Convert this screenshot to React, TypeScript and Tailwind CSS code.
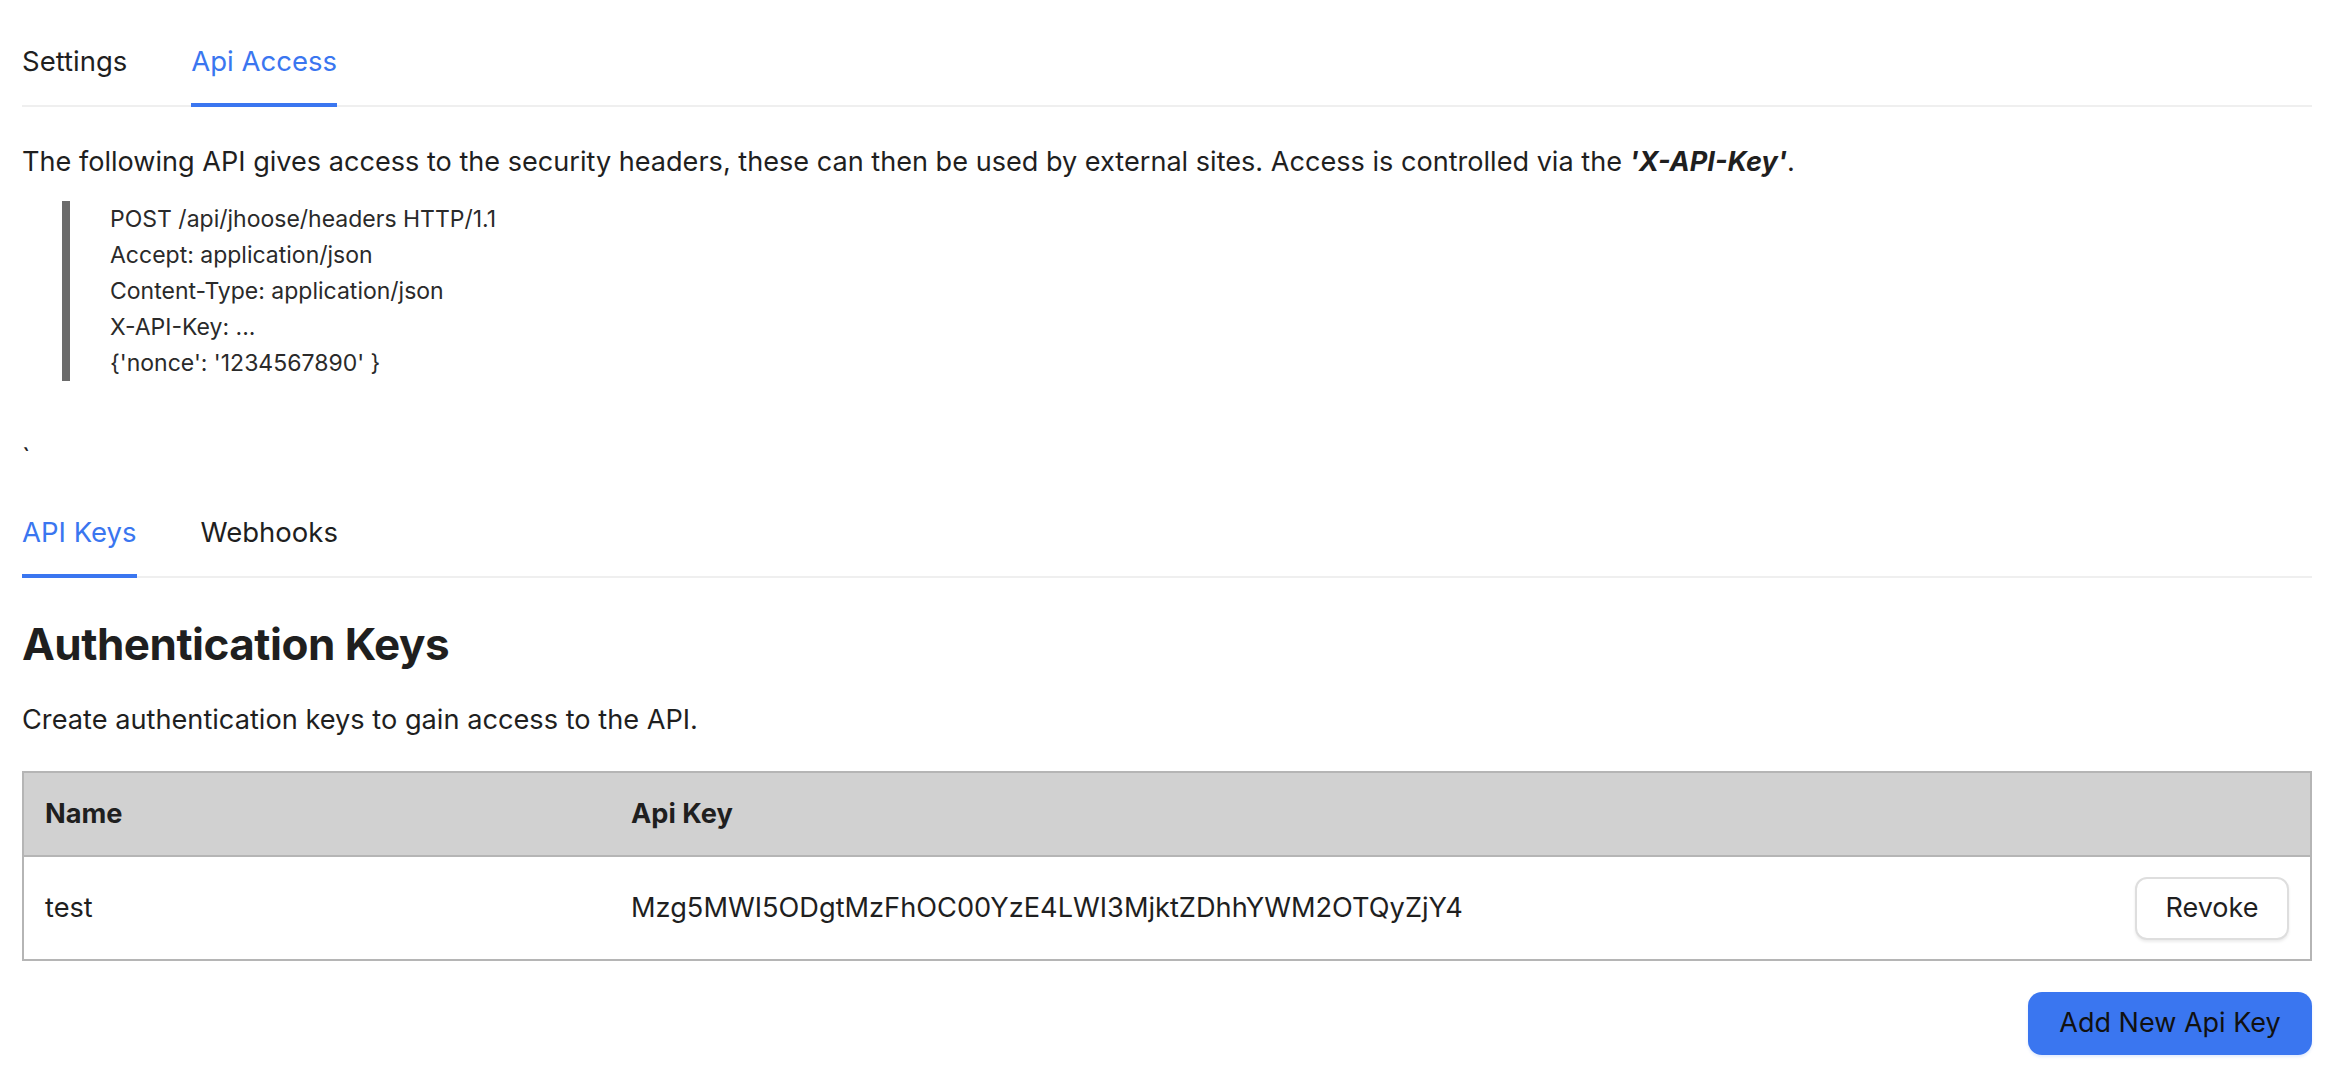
import React from "react";

const font = "font-['Inter','Noto_Sans',sans-serif]";

function Tabs({ items, active }: { items: string[]; active: number }) {
  return (
    <div className="flex gap-[64px] border-b-2 border-[#efefef]">
      {items.map((t, i) => (
        <div
          key={t}
          className={
            i === active
              ? "-mb-[2px] border-b-4 border-[#3a76f0] pb-[26px] text-[27.5px] leading-[32px] text-[#3a76f0]"
              : "-mb-[2px] border-b-4 border-transparent pb-[26px] text-[27.5px] leading-[32px] text-[#1f1f1f]"
          }
        >
          {t}
        </div>
      ))}
    </div>
  );
}

const request = [
  "POST /api/jhoose/headers HTTP/1.1",
  "Accept: application/json",
  "Content-Type: application/json",
  "X-API-Key: ...",
  "{'nonce': '1234567890' }",
];

export default function App() {
  return (
    <div className={`min-h-screen bg-white px-[22px] pt-[45px] text-[#1f1f1f] ${font}`}>
      <Tabs items={["Settings", "Api Access"]} active={1} />

      <p className="mt-[37px] text-[27.1px] leading-[36px]">
        The following API gives access to the security headers, these can then be used by external sites. Access is
        controlled via the <em className="font-bold">'X-API-Key'</em>.
      </p>

      <blockquote className="ml-[40px] mt-[21px] border-l-8 border-[#6b6b6b] pl-[40px] text-[23px] leading-[36px] text-[#2a2a2a]">
        {request.map((l) => (
          <div key={l}>{l}</div>
        ))}
      </blockquote>

      <p className="mt-[59px] text-[26px] leading-[36px]">`</p>

      <div className="mt-[40px]">
        <Tabs items={["API Keys", "Webhooks"]} active={0} />
      </div>

      <h1 className="mt-[38px] text-[44px] font-bold leading-[56px] tracking-[-0.5px]">Authentication Keys</h1>
      <p className="mt-[30px] text-[27.2px] leading-[36px]">Create authentication keys to gain access to the API.</p>

      <table className="mt-[33px] w-full border-collapse border-2 border-[#b5b5b5] text-[27.2px]">
        <thead>
          <tr className="h-[84px] bg-[#d1d1d1] text-left">
            <th className="w-[608px] pl-[21px] font-bold">Name</th>
            <th className="font-bold">Api Key</th>
            <th />
          </tr>
        </thead>
        <tbody>
          <tr className="h-[104px] border-t-2 border-[#b5b5b5]">
            <td className="pl-[21px]">test</td>
            <td>Mzg5MWI5ODgtMzFhOC00YzE4LWI3MjktZDhhYWM2OTQyZjY4</td>
            <td className="pr-[21px] text-right">
              <button className="h-[63px] w-[154px] rounded-[12px] border-2 border-[#dedede] bg-white text-[27px] shadow-[0_2px_3px_rgba(0,0,0,0.08)]">
                Revoke
              </button>
            </td>
          </tr>
        </tbody>
      </table>

      <div className="mt-[31px] flex justify-end">
        <button className="h-[63px] w-[284px] rounded-[14px] bg-[#3a76f0] text-[27px] text-[#111] shadow-[0_2px_3px_rgba(58,118,240,0.15)]">
          Add New Api Key
        </button>
      </div>
    </div>
  );
}
